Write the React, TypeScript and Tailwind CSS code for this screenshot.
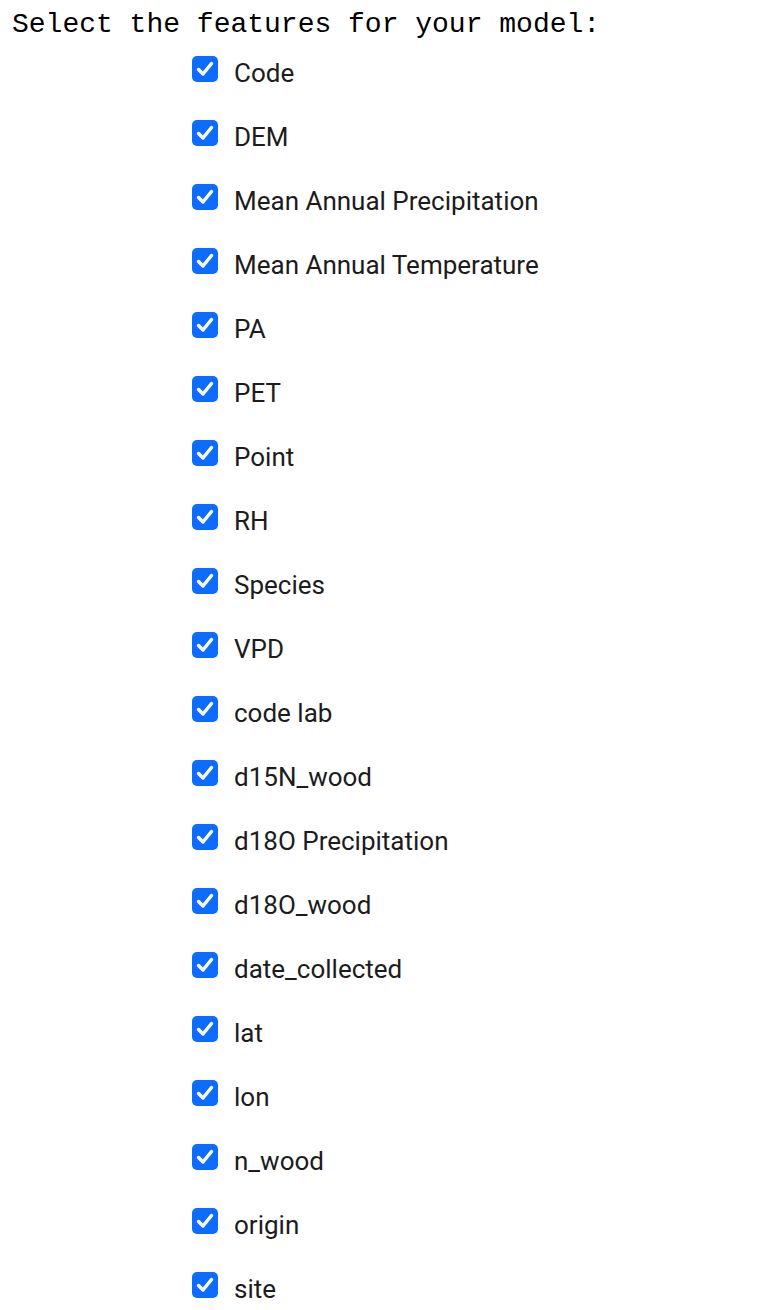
const FEATURES = [
  "Code",
  "DEM",
  "Mean Annual Precipitation",
  "Mean Annual Temperature",
  "PA",
  "PET",
  "Point",
  "RH",
  "Species",
  "VPD",
  "code lab",
  "d15N_wood",
  "d18O Precipitation",
  "d18O_wood",
  "date_collected",
  "lat",
  "lon",
  "n_wood",
  "origin",
  "site",
];

function CheckBox() {
  return (
    <span className="flex h-[26px] w-[26px] shrink-0 items-center justify-center rounded-[5px] bg-[#0b6cff]">
      <svg viewBox="0 0 26 26" className="h-[26px] w-[26px]" fill="none">
        <path
          d="M6.5 13.5 L11 18 L19.5 7.5"
          stroke="white"
          strokeWidth="3.4"
          strokeLinecap="round"
          strokeLinejoin="round"
        />
      </svg>
    </span>
  );
}

export default function App() {
  return (
    <div className="min-h-[1310px] bg-white text-[#1a1a1a]">
      <div className="pl-[12px] pt-[2px] font-['Liberation_Mono',monospace] text-[28px] leading-[46px] text-black">
        Select the features for your model:
      </div>
      <div className="mt-[8px] flex flex-col pl-[192px]">
        {FEATURES.map((f) => (
          <label key={f} className="flex h-[64px] items-start gap-[16px]">
            <CheckBox />
            <span className="mt-[4px] font-['Roboto',sans-serif] text-[26px] leading-[26px] text-[#1c1c1c]">
              {f}
            </span>
          </label>
        ))}
      </div>
    </div>
  );
}
